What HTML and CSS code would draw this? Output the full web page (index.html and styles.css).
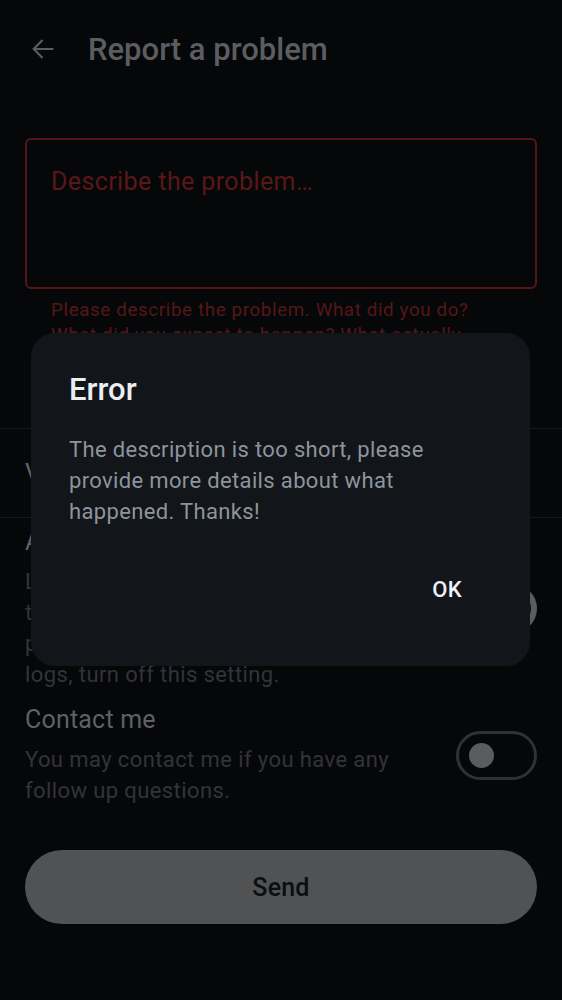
FILE: index.html
```html
<!DOCTYPE html>
<html lang="en">
<head>
<meta charset="utf-8">
<title>Report a problem</title>
<link rel="stylesheet" href="styles.css">
</head>
<body>
<div class="screen">
  <header class="topbar">
    <svg class="back" width="28" height="28" viewBox="0 0 24 24"><path d="M20 12H4.5M11 5l-7 7 7 7" fill="none" stroke="currentColor" stroke-width="1.8" stroke-linecap="square"/></svg>
    <h1 class="title">Report a problem</h1>
  </header>

  <main class="content">
    <div class="field">
      <div class="input">Describe the problem…</div>
      <p class="helper">Please describe the problem. What did you do? What did you expect to happen? What actually happened?</p>
    </div>

    <div class="row-link">View system information</div>

    <div class="setting first">
      <div class="setting-text">
        <div class="setting-title">Attach logs</div>
        <div class="setting-desc">Logs help us find out what went wrong,<br>they may include information such as<br>phone model. If you don't want to send<br>logs, turn off this setting.</div>
      </div>
      <div class="switch on"><span class="thumb"></span></div>
    </div>

    <div class="setting">
      <div class="setting-text">
        <div class="setting-title">Contact me</div>
        <div class="setting-desc">You may contact me if you have any follow up questions.</div>
      </div>
      <div class="switch off"><span class="thumb"></span></div>
    </div>

    <button class="send">Send</button>
  </main>

  <div class="dialog">
    <h2 class="dialog-title">Error</h2>
    <p class="dialog-body">The description is too short, please provide more details about what happened. Thanks!</p>
    <div class="dialog-actions"><button class="ok">OK</button></div>
  </div>
</div>
</body>
</html>
```

FILE: styles.css
```css
* { box-sizing: border-box; }
html, body { margin: 0; padding: 0; background: #060709; }
body { font-family: Roboto, "Noto Sans", sans-serif; }
.screen { position: relative; width: 562px; height: 1000px; overflow: hidden; background: #060709; }

.topbar { height: 100px; display: flex; align-items: center; padding-left: 29px; color: #5b5d61; }
.back { display: block; margin-top: -2px; }
.title { margin: -2px 0 0 31px; font-size: 31px; font-weight: 500; letter-spacing: 0; color: #5b5d61; }

.content { padding: 38px 25px 0; display: flex; flex-direction: column; }
.field { display: flex; flex-direction: column; }
.input { height: 151px; border: 2px solid #561616; border-radius: 6px; padding: 26px 24px; font-size: 25px; letter-spacing: 0.4px; color: #5a1717; line-height: 32px; }
.helper { margin: 9px 0 0; padding: 0 26px; font-size: 18.75px; line-height: 25px; letter-spacing: 0.63px; color: #561717; }

.row-link { margin: 55px -25px 0; padding: 0 25px; height: 90px; display: flex; align-items: center; border-top: 1px solid #17181b; border-bottom: 1px solid #17181b; font-size: 25px; color: #5f6165; letter-spacing: 0.2px; }

.setting { display: flex; align-items: center; gap: 20px; }
.setting.first { margin-top: 8px; }
.setting + .setting { margin-top: 14px; }
.setting-text { flex: 1; }
.setting-title { font-size: 25px; line-height: 32px; color: #5f6165; letter-spacing: 0.2px; }
.setting-desc { font-size: 22px; line-height: 31px; letter-spacing: 0.4px; color: #323438; margin-top: 8px; }

.switch { width: 81px; height: 49px; border-radius: 25px; flex: none; position: relative; }
.switch.on { background: #5a5c5f; }
.switch.on .thumb { position: absolute; right: 6px; top: 6px; width: 37px; height: 37px; border-radius: 50%; background: #0d0e10; }
.switch.off { border: 3px solid #2f3134; }
.switch.off .thumb { position: absolute; left: 10px; top: 9px; width: 25px; height: 25px; border-radius: 50%; background: #5a5c5f; }

.send { margin-top: 44px; height: 74px; border: 0; border-radius: 37px; background: #515254; color: #0c0d0f; font-family: Roboto, sans-serif; font-size: 25px; font-weight: 500; letter-spacing: 0.2px; }

.dialog { position: absolute; left: 31px; top: 333px; width: 499px; height: 333px; background: #12151a; border-radius: 24px; padding: 39px 38px 0; display: flex; flex-direction: column; }
.dialog-title { margin: 0; font-size: 31px; line-height: 36px; font-weight: 500; color: #eceef2; }
.dialog-body { margin: 26px 0 0; font-size: 22px; line-height: 31px; letter-spacing: 0.35px; color: #8e949c; }
.dialog-actions { display: flex; justify-content: flex-end; margin-top: 31px; }
.ok { background: none; border: 0; height: 62px; padding: 0 30px; font-family: Roboto, sans-serif; font-size: 22px; font-weight: 500; letter-spacing: 0.3px; color: #eef0f4; }
```
